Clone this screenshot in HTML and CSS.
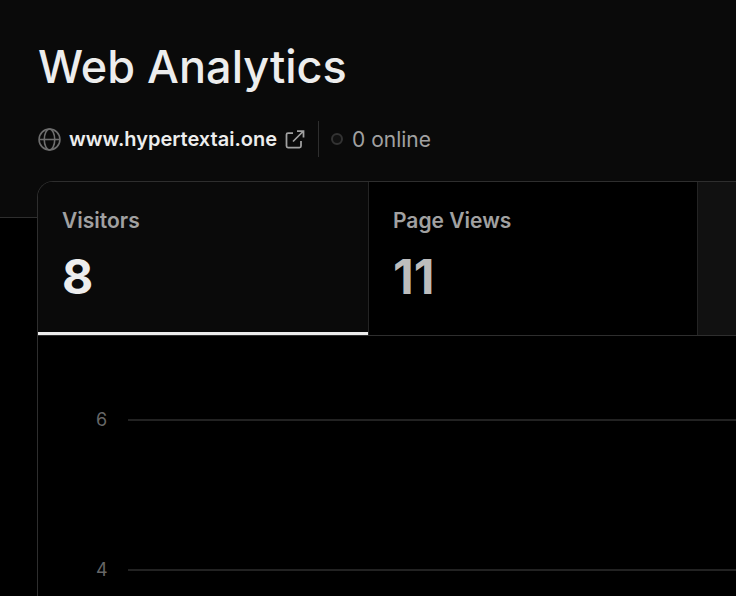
FILE: index.html
```html
<!DOCTYPE html>
<html lang="en">
<head>
<meta charset="utf-8">
<meta name="viewport" content="width=device-width, initial-scale=1">
<title>Web Analytics</title>
<link rel="stylesheet" href="styles.css">
</head>
<body>
<header class="header">
  <h1 class="title">Web Analytics</h1>
  <div class="meta">
    <a class="site" href="#">
      <svg class="globe" viewBox="0 0 22 22" fill="none" stroke="currentColor" stroke-width="1.5" aria-hidden="true"><circle cx="11" cy="11" r="10"/><ellipse cx="11" cy="11" rx="5" ry="10"/><path d="M1 11h20"/></svg>
      <span>www.hypertextai.one</span>
      <svg class="external" viewBox="0 0 20 20" fill="none" stroke="currentColor" stroke-width="1.75" aria-hidden="true"><path d="M8 4H3Q1.500 4 1.500 5.500V17Q1.500 18.500 3 18.500H14.500Q16 18.500 16 17V12M12 2H18.500V8.500M18.500 2L8 12.500"/></svg>
    </a>
    <p class="online"><span class="dot"></span>0 online</p>
  </div>
</header>
<main class="card">
  <div class="tabs" role="tablist">
    <button class="tab active" type="button" role="tab" aria-selected="true"><span class="label">Visitors</span><span class="value">8</span></button>
    <button class="tab" type="button" role="tab" aria-selected="false"><span class="label">Page Views</span><span class="value">11</span></button>
    <div class="filler"></div>
  </div>
  <div class="chart">
    <div class="tick"><span>6</span><i class="line"></i></div>
    <div class="tick"><span>4</span><i class="line"></i></div>
  </div>
</main>
</body>
</html>
```
FILE: styles.css
```css
* { box-sizing: border-box; }
body {
  margin: 0;
  min-height: 100vh;
  display: flex;
  flex-direction: column;
  background: #000;
  color: #ededed;
  font-family: Inter, "Liberation Sans", sans-serif;
  overflow-x: hidden;
}
.header {
  height: 218px;
  padding: 38px 38px 0;
  background: #0a0a0a;
  border-bottom: 1px solid #2e2e2e;
}
.title { margin: 0; font-size: 45px; line-height: 58px; font-weight: 500; }
.meta { display: flex; align-items: center; height: 36px; margin-top: 25px; font-size: 21px; }
.site {
  display: flex;
  align-items: center;
  gap: 8px;
  padding-right: 13px;
  color: #ededed;
  font-size: 20px;
  font-weight: 600;
  text-decoration: none;
}
.globe { width: 23px; height: 23px; color: #6e6e6e; }
.external { width: 20px; height: 20px; color: #a1a1a1; }
.online {
  display: flex;
  align-items: center;
  gap: 9px;
  height: 36px;
  margin: 0;
  padding-left: 12px;
  border-left: 1px solid #2e2e2e;
  color: #a1a1a1;
}
.dot { width: 12px; height: 12px; border: 2px solid #333; border-radius: 50%; background: #111; }
.card {
  flex: 1;
  display: flex;
  flex-direction: column;
  margin: -37px 0 0 37px;
  border: 1px solid #2e2e2e;
  border-width: 1px 0 0 1px;
  border-radius: 16px 0 0 0;
  background: #000;
  overflow: hidden;
}
.tabs { display: grid; grid-template-columns: 331px 329px 1fr; border-bottom: 1px solid #2e2e2e; }
.tab {
  display: flex;
  flex-direction: column;
  align-items: flex-start;
  gap: 12px;
  height: 153px;
  padding: 24px;
  border: 0;
  border-right: 1px solid #242424;
  background: #000;
  color: #bdbdbd;
  font-family: inherit;
  text-align: left;
}
.active { background: linear-gradient(#ededed, #ededed) bottom / 100% 3px no-repeat #0a0a0a; color: #ededed; }
.label { color: #a1a1a1; font-size: 21px; line-height: 30px; font-weight: 600; }
.value { font-size: 48px; line-height: 58px; font-weight: 700; }
.filler { background: #111; }
.chart { padding: 69px 0 0 58px; }
.tick { display: flex; align-items: center; gap: 21px; height: 30px; margin-bottom: 120px; color: #666; font-size: 18px; }
.tick:last-child { margin-bottom: 0; }
.tick span { width: 11px; padding-bottom: 2px; }
.line { flex: 1; height: 2px; background: #222; }
```
